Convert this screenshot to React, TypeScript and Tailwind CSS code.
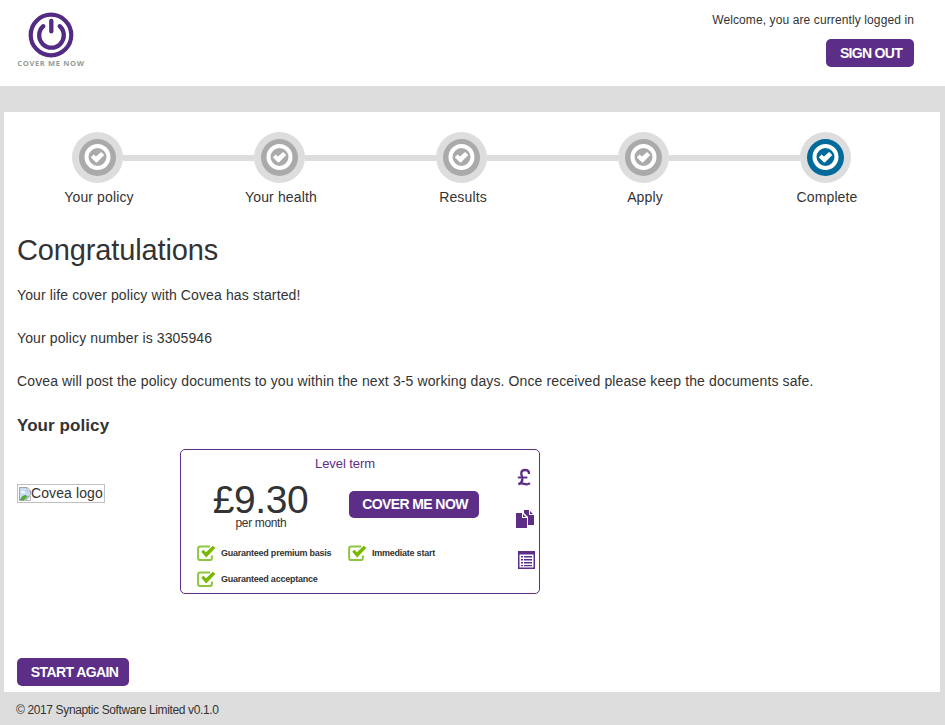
import React from 'react';

const FONT = "font-['Liberation_Sans',Arial,sans-serif]";

function Logo() {
  return (
    <div className="flex w-[68px] flex-col items-center">
      <svg width="46" height="46" viewBox="0 0 46 46" fill="none" stroke="#532b83" className="block">
        <circle cx="23" cy="23" r="20.3" strokeWidth="4.2" />
        <path d="M15.3 14.2A12.3 12.3 0 1 0 31.7 14.2" strokeWidth="4.3" strokeLinecap="round" />
        <path d="M23.3 8.8V19.4" strokeWidth="4.3" strokeLinecap="round" />
      </svg>
      <div className="whitespace-nowrap font-['Open_Sans',sans-serif] text-[7.5px] leading-[11px] font-bold tracking-[0.68px] text-[#939b98]">
        COVER ME NOW
      </div>
    </div>
  );
}

function StepIcon({ active }: { active: boolean }) {
  return (
    <svg width="51" height="51" viewBox="0 0 51 51" className="block shrink-0">
      <circle cx="25.5" cy="25.5" r="25.5" fill="#ddd" />
      <circle cx="25.5" cy="25.5" r="18.5" fill={active ? '#006b9a' : '#aaa'} />
      <circle cx="25.5" cy="25" r="11" fill="none" stroke="#fff" strokeWidth="4" />
      <path d="M18.8 25.2L21.6 22.4L24 24.4L29.1 19.9L32.3 22.9L24.9 30.6H24Z" fill="#fff" />
    </svg>
  );
}

function Steps() {
  const steps = ['Your policy', 'Your health', 'Results', 'Apply', 'Complete'];
  return (
    <div className="flex pl-[2.5px]">
      {steps.map((label, i) => (
        <div key={label} className="flex w-[182px] flex-col">
          <div className="flex items-center">
            <div className={i > 0 ? 'h-[6px] flex-1 bg-[#ddd]' : 'h-[6px] flex-1'} />
            <StepIcon active={i === 4} />
            <div className={i < 4 ? 'h-[6px] flex-1 bg-[#ddd]' : 'h-[6px] flex-1'} />
          </div>
          <div className="mt-[4px] pl-[3px] text-center text-[14px] leading-5 tracking-[0.13px]">{label}</div>
        </div>
      ))}
    </div>
  );
}

function Tick({ label }: { label: string }) {
  return (
    <div className="flex h-[26px] items-center">
      <svg width="19" height="17" viewBox="0 0 19 17" fill="none" className="mr-[5px] block">
        <path
          d="M13 1.4H3.2Q1.1 1.4 1.1 3.5V13Q1.1 15.1 3.2 15.1H12.8Q14.9 15.1 14.9 13V10.5"
          stroke="#8dc63f"
          strokeWidth="2"
        />
        <path d="M4.2 6.8L6.4 4.7L9 7.3L15.8 .8L18.3 3L9.2 12.4Z" fill="#7ab800" />
      </svg>
      <span className="whitespace-nowrap text-[9px] leading-[12px] font-bold tracking-[-0.24px]">{label}</span>
    </div>
  );
}

function BrokenImage() {
  return (
    <div className="flex h-[19px] w-[88px] items-center border border-[#c0c0c0] pl-px">
      <svg width="12" height="14" viewBox="0 0 12 14" className="block shrink-0">
        <path d="M.5.5H8L11.5 4V8L5 13.5H.5Z" fill="#c9dbf7" stroke="#a3a3a3" />
        <path d="M8 .5V4H11.5Z" fill="#fff" stroke="#a3a3a3" strokeWidth=".8" />
        <path d="M2 5.5Q2.4 4 4 4.3Q5.6 3.7 6.3 6H2Z" fill="#fff" />
        <path d="M1 12.9Q3 8.2 6 8Q8 8 8.5 9.5L4.8 12.9Z" fill="#4caa35" />
        <path d="M6 13.5L11.5 9V13.5Z" fill="#fff" stroke="#a3a3a3" strokeWidth=".8" />
      </svg>
      <span className="whitespace-nowrap text-[14px] leading-[17px] tracking-[0.1px]">Covea logo</span>
    </div>
  );
}

function PolicyCard() {
  return (
    <div className="flex h-[145px] w-[360px] rounded-[5px] border border-[#5c2e87]">
      <div className="w-[328px]">
        <div className="pt-[4px] text-center text-[13px] leading-5 tracking-[-0.08px] text-[#5c2e87]">Level term</div>
        <div className="flex h-[66px]">
          <div className="w-[160px] pt-[9px] text-center">
            <div className="pr-px text-[39px] leading-[34px] tracking-[-0.4px]">£9.30</div>
            <div className="text-[12px] leading-[12px] tracking-[-0.35px]">per month</div>
          </div>
          <button className="mt-[17px] ml-[8px] h-[27px] w-[130px] rounded-[5px] bg-[#5c2e87] pl-[2px] text-[14px] leading-[27px] font-bold tracking-[-0.6px] whitespace-nowrap text-white">
            COVER ME NOW
          </button>
        </div>
        <div className="grid grid-cols-[151px_1fr] pl-[16px]">
          <Tick label="Guaranteed premium basis" />
          <Tick label="Immediate start" />
          <Tick label="Guaranteed acceptance" />
        </div>
      </div>
      <div className="flex flex-col items-start pt-[18px] pl-[7px]">
        <svg width="14" height="18" viewBox="0 0 14 18" className="ml-px block" fill="none" stroke="#5c2e87" strokeWidth="2.3">
          <path d="M12 6V5.4C12 .9 4.3 .8 4.3 5.5C4.3 8.2 5.8 9 5.3 12C5 14 3.6 15.4 1.4 16.3C4.5 14.2 7 16.2 9.3 16.3C11 16.3 12 15.9 13 15.1" />
          <path d="M.8 9.5H10.4" strokeWidth="1.9" />
        </svg>
        <svg width="19" height="18" viewBox="0 0 19 18" className="mt-[24px] block" fill="#5c2e87">
          <path d="M0 3H6V8H11V18H0ZM7 4L10 7H7Z" />
          <path d="M8 0H13V5H18V15H12V7L8 3ZM14 1L17 4H14Z" />
        </svg>
        <svg width="17" height="18" viewBox="0 0 17 18" className="mt-[23px] ml-[2px] block" fill="#5c2e87">
          <path fillRule="evenodd" d="M0 0H17V18H0ZM1.5 3.5V16.5H15.5V3.5Z" />
          <path d="M3 5H5V6.5H3ZM6 5H14V6.5H6ZM3 8H5V9.5H3ZM6 8H14V9.5H6ZM3 11H5V12.5H3ZM6 11H14V12.5H6ZM3 14H5V15.2H3ZM6 14H14V15.2H6Z" />
        </svg>
      </div>
    </div>
  );
}

export default function App() {
  return (
    <div className={`flex h-[725px] w-[945px] flex-col overflow-hidden bg-[#ddd] text-[#333] ${FONT}`}>
      <header className="flex h-[86px] items-start justify-between bg-white pr-[31px] pl-[17px]">
        <div className="pt-[12px]">
          <Logo />
        </div>
        <div className="flex flex-col items-end pt-[10px]">
          <div className="text-[12px] leading-5 tracking-[0.11px]">Welcome, you are currently logged in</div>
          <button className="mt-[9px] h-[28px] w-[88px] rounded-[5px] bg-[#5c2e87] pb-px pl-[2px] text-[14px] leading-[26px] font-bold tracking-[-0.7px] text-white">
            SIGN OUT
          </button>
        </div>
      </header>
      <main className="mt-[26px] mr-[5px] ml-[4px] h-[580px] bg-white pt-[20px]">
        <Steps />
        <div className="pl-[13px]">
          <h1 className="mt-[23px] text-[29px] leading-[40px] tracking-[-0.14px]">Congratulations</h1>
          <div className="mt-[15px] flex flex-col gap-[23px] text-[14px] leading-5 tracking-[0.117px]">
            <p>Your life cover policy with Covea has started!</p>
            <p>Your policy number is 3305946</p>
            <p>Covea will post the policy documents to you within the next 3-5 working days. Once received please keep the documents safe.</p>
          </div>
          <h2 className="mt-[25px] text-[17px] leading-5 font-bold tracking-[0.08px]">Your policy</h2>
          <div className="mt-[13px] flex">
            <div className="w-[163px] pt-[35px]">
              <BrokenImage />
            </div>
            <PolicyCard />
          </div>
          <button className="mt-[64px] block h-[28px] w-[112px] rounded-[5px] bg-[#5c2e87] pb-px pl-[3px] text-[14px] leading-[26px] font-bold tracking-[-0.6px] text-white">
            START AGAIN
          </button>
        </div>
      </main>
      <footer className="pt-[8px] pl-[16px] text-[12px] leading-5 tracking-[-0.37px]">© 2017 Synaptic Software Limited v0.1.0</footer>
    </div>
  );
}
